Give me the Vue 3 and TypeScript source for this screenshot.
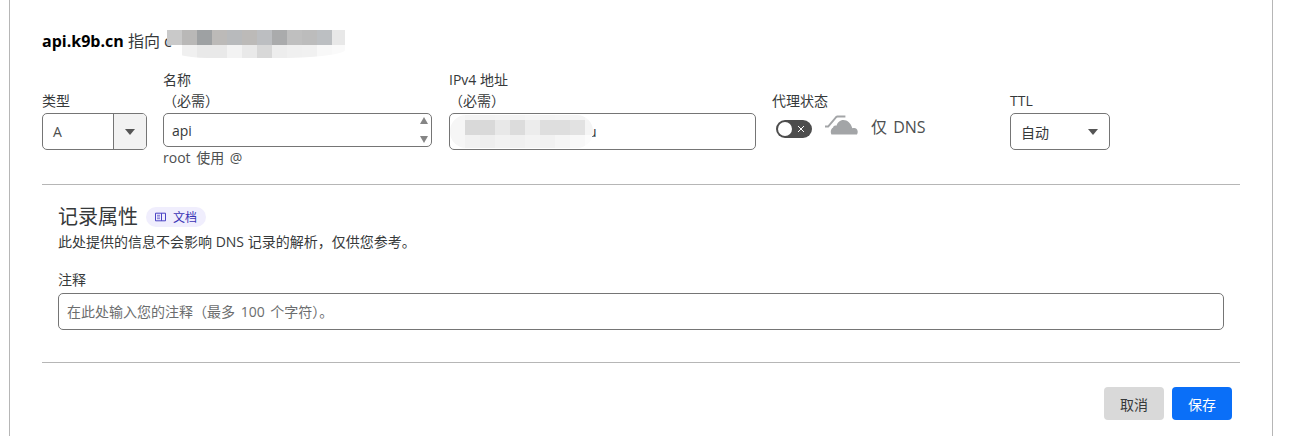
<script setup lang="ts">
import { ref } from 'vue'

const name = ref('api')
const comment = ref('')

// Mosaics that hide the address in the screenshot
const headMosaic: string[][] = [
  ['#c9c9c9', '#b9b8b7', '#9ea1a3', '#bcbab8', '#b8babc', '#bcbab8', '#bcbec1', '#aaabac', '#bfbfbf', '#bcbcbc', '#bcbfc2', '#e8e8e8'],
  ['transparent', '#f0f0f0', '#e9e9e9', '#e9e9e9', '#f3f3f3', '#e9e9e9', '#d8d8d8', '#ededed', '#f0f0f0', '#f1f1f1', '#f8f8f8', '#fafafa'],
]
const ipMosaic: string[][] = [
  ['#f6f6f6', '#f3f3f3', '#f2f2f2', '#f3f3f3', '#f3f3f3', '#f5f5f5', '#f3f3f3', '#f4f4f4', '#f4f4f4', '#f8f8f8'],
  ['#f6f6f6', '#d9d9d9', '#d9d9d9', '#e8e8e8', '#dcdcdc', '#ececec', '#dedede', '#dedede', '#e2e2e2', '#f5f5f5'],
  ['#f6f6f6', '#f1f1f1', '#eeeeee', '#f2f2f2', '#f0f0f0', '#f3f3f3', '#f1f1f1', '#f5f5f5', '#f8f8f8', '#fcfcfc'],
]
</script>

<template>
  <main class="panel">
    <h2 class="title">
      <b>api.k9b.cn</b> 指向 c
      <span class="mosaic mosaic-head">
        <span v-for="(row, r) in headMosaic" :key="r" class="mosaic-row">
          <i v-for="(c, j) in row" :key="j" :style="{ background: c }"></i>
        </span>
      </span>
    </h2>

    <div class="form-row">
      <div class="field f-type">
        <label>类型</label>
        <div class="box select-type">
          <span class="val">A</span>
          <span class="caret-cell"><i class="caret"></i></span>
        </div>
      </div>

      <div class="field f-name">
        <label>名称<br>（必需）</label>
        <div class="box name-box">
          <input v-model="name" class="plain" type="text">
          <span class="spin up"></span>
          <span class="spin down"></span>
        </div>
        <p class="hint">root 使用 @</p>
      </div>

      <div class="field f-ip">
        <label>IPv4 地址<br>（必需）</label>
        <div class="box ip-box">
          <span class="ip-tail">u</span>
          <span class="mosaic mosaic-ip">
            <span v-for="(row, r) in ipMosaic" :key="r" class="mosaic-row">
              <i v-for="(c, j) in row" :key="j" :style="{ background: c }"></i>
            </span>
          </span>
        </div>
      </div>

      <div class="field f-proxy">
        <label>代理状态</label>
        <div class="proxy">
          <span class="toggle">
            <i class="knob"></i>
            <svg class="x" width="8" height="8" viewBox="0 0 8 8" stroke="#fff" stroke-width="1">
              <path d="M1 1 L7 7 M7 1 L1 7" />
            </svg>
          </span>
          <svg class="cloud" width="34" height="24" viewBox="0 0 34 24">
            <path d="M0 13.6 H3.6 L10.8 5 C11.6 4.1 12.2 3.6 13.4 3.6 H20.4 V1.6 H13 C11.4 1.6 10.6 2.2 9.6 3.4 L2.8 11.6 H0 Z" fill="#a3a5a7" />
            <path d="M6.4 20.4 H32 C33.6 18.2 32.6 14.4 29.4 14 C28.6 13.9 27.9 14 27.3 14.3 C26 9.2 22.4 6 18.4 6 C15 6 12.4 8.6 11.4 11.8 C10 11.2 8.4 12 8 13.8 C6 14.4 5.2 17.8 6.4 20.4 Z" fill="#a3a5a7" />
          </svg>
          <span class="dns">仅 DNS</span>
        </div>
      </div>

      <div class="field f-ttl">
        <label>TTL</label>
        <div class="box select-ttl">
          <span>自动</span>
          <i class="caret"></i>
        </div>
      </div>
    </div>

    <hr class="rule">

    <section class="attrs">
      <div class="attrs-head">
        <h3>记录属性</h3>
        <a class="chip">
          <svg width="11" height="10" viewBox="0 0 11 10" fill="none" stroke="#4a43c4" stroke-width="1">
            <path d="M.5 1.2 H10.5 V8.8 H.5 Z" />
            <path d="M6.5 1.2 V8.8" />
            <path d="M2 3.3 H5 M2 5 H5 M2 6.7 H5" stroke-width=".7" />
          </svg>
          文档
        </a>
      </div>
      <p class="desc">此处提供的信息不会影响 DNS 记录的解析，仅供您参考。</p>
      <label class="comment-label">注释</label>
      <input v-model="comment" class="box comment" type="text" placeholder="在此处输入您的注释（最多 100 个字符）。">
    </section>

    <hr class="rule">

    <div class="actions">
      <button class="btn cancel" type="button">取消</button>
      <button class="btn save" type="button">保存</button>
    </div>
  </main>
</template>

<style>
html, body {
  margin: 0;
  background: #fff;
  overflow: hidden;
}
</style>

<style scoped>
.panel {
  box-sizing: border-box;
  width: 1264px;
  height: 436px;
  margin-left: 9px;
  padding: 0 32px;
  border-left: 1px solid #b6b6b6;
  border-right: 1px solid #b6b6b6;
  font-family: "Open Sans", "Noto Sans CJK SC", sans-serif;
  font-size: 14px;
  color: #36393a;
}

.title {
  position: relative;
  margin: 0;
  padding-top: 31px;
  height: 69px;
  box-sizing: border-box;
  font-size: 16px;
  line-height: 20px;
  font-weight: 400;
}
.title b {
  color: #000;
  font-size: 16px;
  font-weight: 700;
}

.mosaic {
  position: absolute;
  display: block;
  overflow: hidden;
}
.mosaic-row {
  display: flex;
}
.mosaic-row i {
  display: block;
  flex: none;
  width: 15px;
  height: 100%;
}
.mosaic-head {
  left: 125px;
  top: 30px;
  width: 178px;
  height: 28px;
  border-radius: 0 0 70px 40px / 0 0 8px 12px;
}
.mosaic-head .mosaic-row {
  height: 15px;
}
.mosaic-ip {
  left: 0;
  top: 1px;
  width: 143px;
  height: 33px;
  border-radius: 16px;
}
.mosaic-ip .mosaic-row {
  height: 15px;
}
.mosaic-ip .mosaic-row:first-child {
  height: 5px;
}

.form-row {
  display: flex;
  align-items: flex-start;
  height: 115px;
}
.field {
  flex: none;
}
.field label {
  display: block;
  height: 44px;
  line-height: 21px;
  font-size: 14px;
}
.f-type { width: 105px; margin-right: 16px; }
.f-name { width: 269px; margin-right: 17px; }
.f-ip { width: 307px; margin-right: 16px; }
.f-proxy { width: 238px; }
.f-ttl { width: 100px; }
.f-type label, .f-proxy label, .f-ttl label {
  padding-top: 21px;
  height: 23px;
}

.box {
  box-sizing: border-box;
  border: 1px solid #757575;
  border-radius: 5px;
  background: #fff;
  height: 37px;
}

.select-type {
  display: flex;
  overflow: hidden;
}
.select-type .val {
  flex: 1;
  padding-left: 10px;
  line-height: 35px;
  font-size: 14px;
  color: #4d4d4d;
}
.caret-cell {
  display: flex;
  align-items: center;
  justify-content: center;
  width: 32px;
  border-left: 1px solid #757575;
  background: #f2f2f2;
}
.caret {
  display: block;
  width: 0;
  height: 0;
  border-left: 5px solid transparent;
  border-right: 5px solid transparent;
  border-top: 6px solid #555;
}

.name-box {
  position: relative;
  height: 34px;
}
.plain {
  box-sizing: border-box;
  width: 100%;
  height: 100%;
  padding: 0 8px;
  border: 0;
  outline: 0;
  background: transparent;
  font: inherit;
  font-size: 14px;
  color: #36393a;
}
.spin {
  position: absolute;
  right: 3px;
  width: 0;
  height: 0;
  border-left: 4px solid transparent;
  border-right: 4px solid transparent;
}
.spin.up { top: 3px; border-bottom: 7px solid #858585; }
.spin.down { bottom: 3px; border-top: 7px solid #858585; }

.hint {
  margin: 1px 0 0;
  line-height: 20px;
  font-size: 14px;
  word-spacing: 2px;
  color: #4d4f50;
}

.ip-box {
  position: relative;
  padding-left: 138px;
  line-height: 36px;
  font-size: 14px;
}
.ip-tail { color: #36393a; }

.proxy {
  display: flex;
  align-items: center;
  height: 32px;
}
.toggle {
  position: relative;
  display: block;
  width: 36px;
  height: 18px;
  margin: 0 0 0 4px;
  border-radius: 9px;
  background: #4d4d4d;
}
.knob {
  position: absolute;
  left: 2px;
  top: 2px;
  width: 14px;
  height: 14px;
  border-radius: 50%;
  background: #fff;
}
.x {
  position: absolute;
  left: 21px;
  top: 5px;
}
.cloud {
  margin: -6px 0 0 13px;
}
.dns {
  margin: 0 0 6px 12px;
  font-size: 16px;
  word-spacing: 2px;
  color: #4d4f50;
}

.select-ttl {
  display: flex;
  align-items: center;
  justify-content: space-between;
  padding: 0 11px 0 10px;
  font-size: 14px;
}

.rule {
  margin: 0;
  border: 0;
  height: 1px;
  background: #b6b6b6;
}

.attrs {
  padding: 0 16px;
  height: 177px;
  box-sizing: border-box;
}
.attrs-head {
  display: flex;
  align-items: center;
  gap: 8px;
  padding-top: 22px;
  height: 20px;
}
.attrs-head h3 {
  margin: 0;
  font-size: 20px;
  font-weight: 400;
  line-height: 20px;
}
.chip {
  display: inline-flex;
  align-items: center;
  gap: 7px;
  height: 20px;
  padding: 0 9px;
  border-radius: 10px;
  background: #f0eefd;
  color: #3a33b5;
  font-size: 12px;
}
.desc {
  margin: 6px 0 0;
  font-size: 14px;
  line-height: 18px;
}
.comment-label {
  display: block;
  margin-top: 19px;
  font-size: 14px;
  line-height: 20px;
}
.comment {
  display: block;
  width: 1166px;
  margin-top: 3px;
  padding: 0 8px;
  outline: 0;
  font: inherit;
  font-size: 14px;
  word-spacing: 2px;
}
.comment::placeholder {
  color: #6b6d6e;
  opacity: 1;
}

.actions {
  display: flex;
  justify-content: flex-end;
  gap: 8px;
  padding: 24px 8px 0 0;
}
.btn {
  width: 60px;
  height: 33px;
  border: 0;
  border-radius: 4px;
  font: inherit;
  font-size: 14px;
  padding: 0;
}
.cancel { background: #d9d9d9; color: #36393a; }
.save { background: #0a6ff8; color: #fff; }
</style>
